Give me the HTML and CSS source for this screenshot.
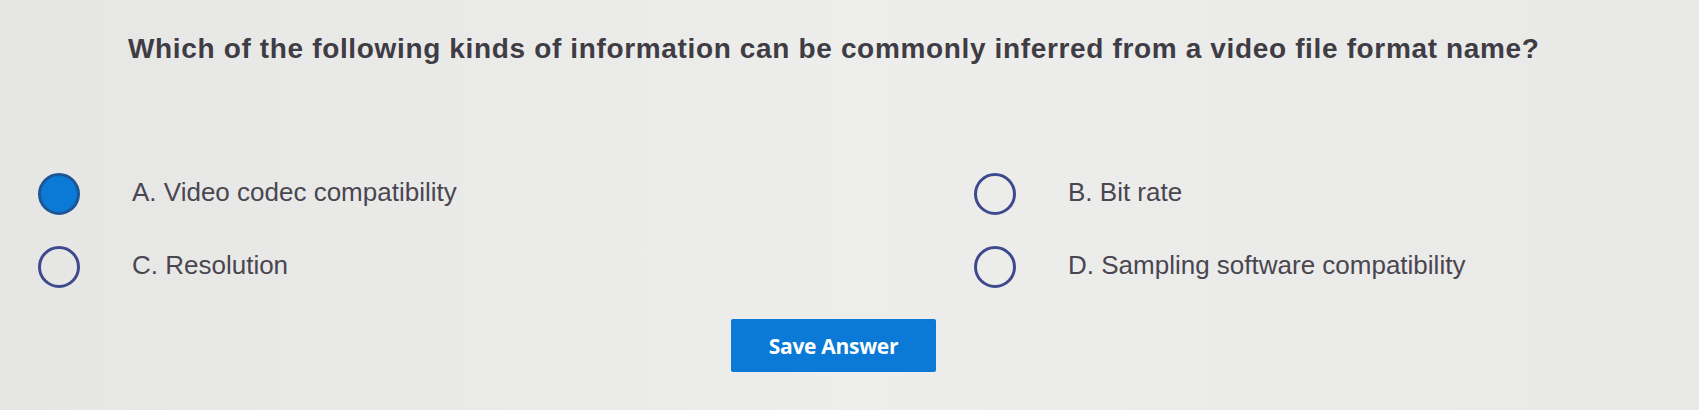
FILE: index.html
```html
<!DOCTYPE html>
<html lang="en">
<head>
  <meta charset="UTF-8">
  <meta name="viewport" content="width=device-width, initial-scale=1.0">
  <title>Question</title>
  <link rel="stylesheet" href="styles.css">
</head>
<body>
  <div class="question">
    <h1 class="prompt">Which of the following kinds of information can be commonly inferred from a video file format name?</h1>

    <div class="options">
      <label class="option">
        <span class="radio checked"></span>
        <span class="option-text">A. Video codec compatibility</span>
      </label>
      <label class="option">
        <span class="radio"></span>
        <span class="option-text">B. Bit rate</span>
      </label>
      <label class="option">
        <span class="radio"></span>
        <span class="option-text">C. Resolution</span>
      </label>
      <label class="option">
        <span class="radio"></span>
        <span class="option-text">D. Sampling software compatibility</span>
      </label>
    </div>

    <div class="actions">
      <button class="save-btn">Save Answer</button>
    </div>
  </div>
</body>
</html>
```

FILE: styles.css
```css
:root {
  --color-bg: #ebebea;
  --color-text: #4a4650;
  --color-title: #3f3c44;
  --color-blue: #0a7ad6;
  --color-ring: #3f4a8e;
}

body {
  margin: 0;
  background: linear-gradient(to right, #e6e6e5, #ededec 50%, #e9e9e8);
  font-family: "Liberation Sans", Arial, sans-serif;
  color: var(--color-text);
  height: 410px;
  overflow: hidden;
}

.question {
  padding: 33px 0 0 38px;
}

.prompt {
  margin: 0 0 0 90px;
  font-size: 28px;
  font-weight: bold;
  letter-spacing: 0.65px;
  line-height: 32px;
  color: var(--color-title);
}

.options {
  display: grid;
  grid-template-columns: 936px 1fr;
  row-gap: 31px;
  margin-top: 108px;
}

.option {
  display: flex;
  align-items: center;
  gap: 52px;
}

.radio {
  width: 36px;
  height: 36px;
  border: 3px solid var(--color-ring);
  border-radius: 50%;
  flex-shrink: 0;
}

.radio.checked {
  background-color: var(--color-blue);
  border-color: #1d5596;
}

.option-text {
  font-size: 26px;
  line-height: 30px;
  margin-top: -5px;
}

.actions {
  display: flex;
  justify-content: center;
  margin-top: 31px;
  padding-right: 70px;
}

.save-btn {
  width: 205px;
  height: 53px;
  border: none;
  border-radius: 2px;
  background-color: var(--color-blue);
  color: #fff;
  font-family: "Open Sans", "Liberation Sans", sans-serif;
  font-weight: bold;
  font-size: 21px;
  letter-spacing: -0.3px;
  cursor: pointer;
}
```
